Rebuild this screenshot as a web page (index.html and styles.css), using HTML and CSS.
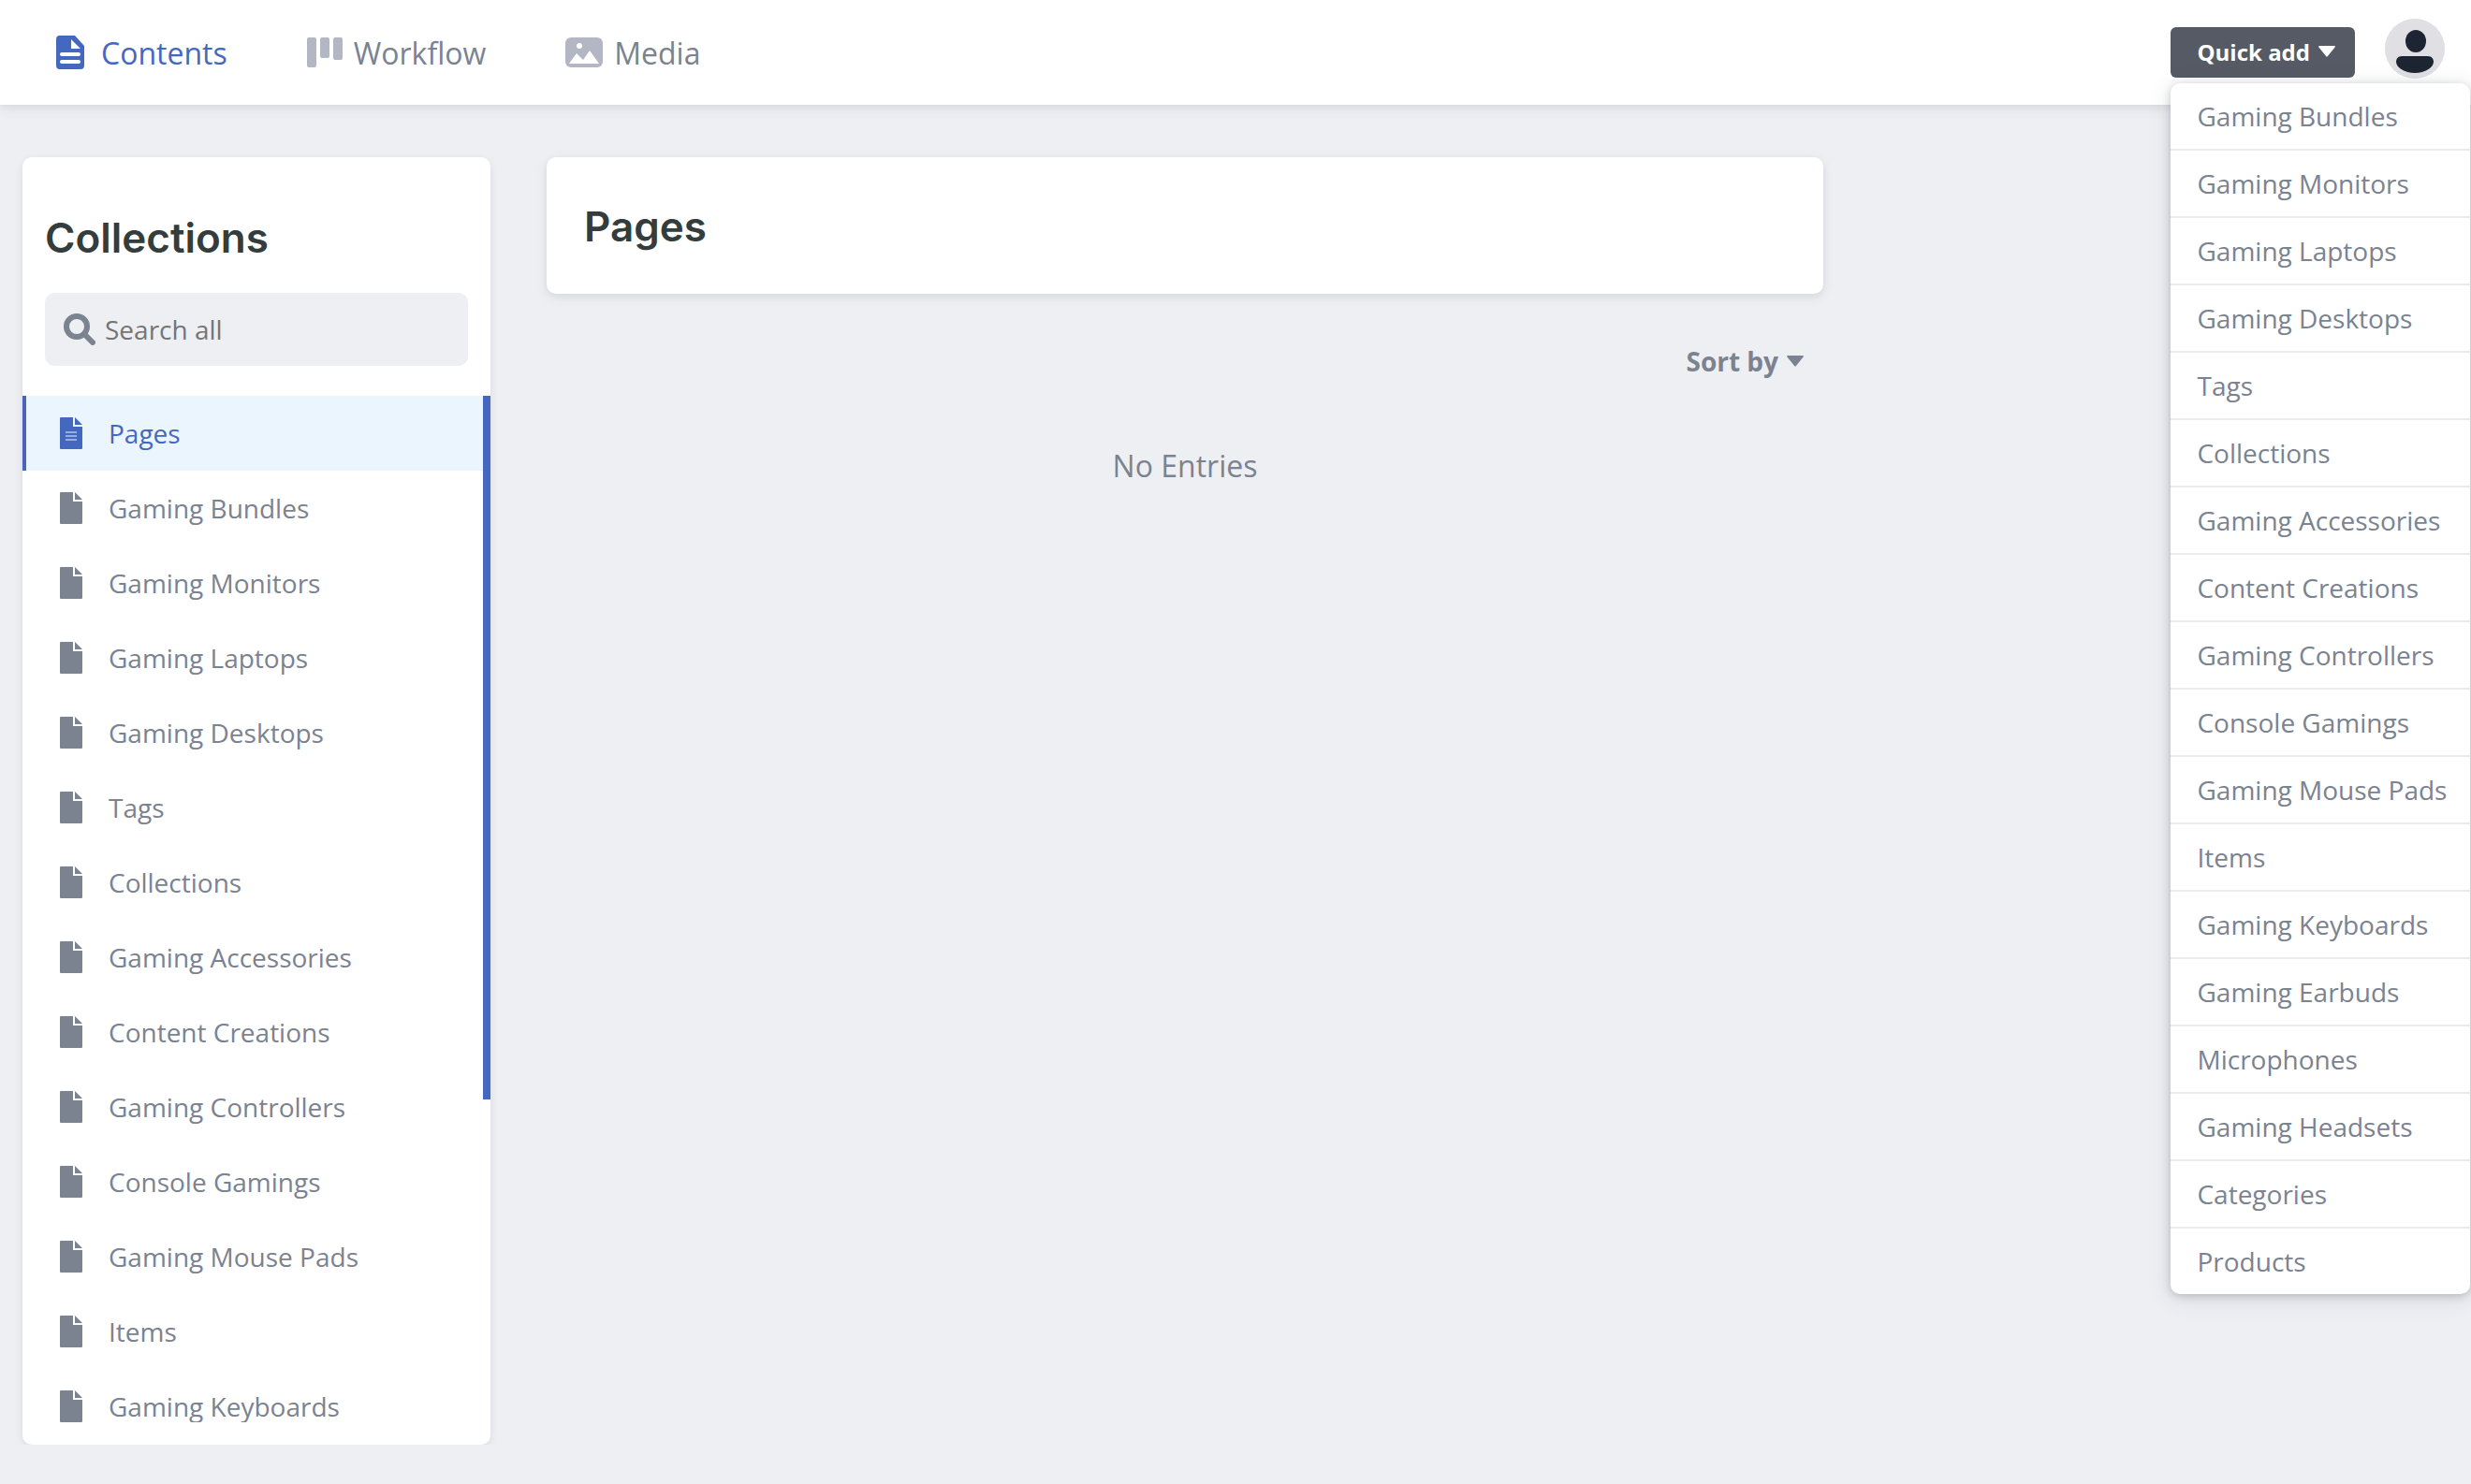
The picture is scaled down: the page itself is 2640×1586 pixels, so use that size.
FILE: index.html
```html
<!DOCTYPE html>
<html lang="en">
  <head>
    <meta charset="UTF-8" />
    <meta name="viewport" content="width=device-width, initial-scale=1.0" />
    <title>Content Manager</title>
    <link rel="stylesheet" href="styles.css">
  </head>

  <body>
    <!-- shared icons -->
    <svg class="sprite" aria-hidden="true">
      <symbol id="icon-file" viewBox="0 0 24 34">
        <path d="M1 0h13v10h10v23a1 1 0 0 1-1 1H1a1 1 0 0 1-1-1V1a1 1 0 0 1 1-1z" />
        <path d="M16 0l8 8h-8z" />
      </symbol>
      <symbol id="icon-caret" viewBox="0 0 18 12">
        <path d="M1 0h16q1.500 0 .6 1.400L9.700 11.300q-.7.900-1.400 0L.4 1.400Q-.5 0 1 0z" />
      </symbol>
    </svg>

    <header class="header">
      <nav class="nav">
        <a href="#contents" class="nav-link active">
          <svg class="nav-icon-page" viewBox="0 0 30 36">
            <path fill-rule="evenodd" d="M4 0h16l10 11v21a4 4 0 0 1-4 4H4a4 4 0 0 1-4-4V4a4 4 0 0 1 4-4zM16 4v10h10zM6 18a2 2 0 0 0 0 4h18a2 2 0 0 0 0-4zM6 26a2 2 0 0 0 0 4h18a2 2 0 0 0 0-4z" />
          </svg>
          Contents
        </a>
        <a href="#workflow" class="nav-link">
          <svg class="nav-icon-board" viewBox="0 0 38 32">
            <rect x="0" y="0" width="10" height="32" rx="2" />
            <rect x="14" y="0" width="10" height="22" rx="2" />
            <rect x="28" y="0" width="10" height="24" rx="2" />
          </svg>
          Workflow
        </a>
        <a href="#media" class="nav-link">
          <svg class="nav-icon-media" viewBox="0 0 40 32">
            <path fill-rule="evenodd" d="M6 0h28a6 6 0 0 1 6 6v20a6 6 0 0 1-6 6H6a6 6 0 0 1-6-6V6a6 6 0 0 1 6-6zM15 6a3 3 0 1 0 0 6a3 3 0 1 0 0-6zM4 28h32L26 14l-7 10l-7-7z" />
          </svg>
          Media
        </a>
      </nav>

      <div class="header-actions">
        <div class="dropdown">
          <button type="button" class="quick-add">
            Quick add
            <svg class="caret"><use href="#icon-caret" /></svg>
          </button>
          <ul class="dropdown-menu">
            <li><a href="#">Gaming Bundles</a></li>
            <li><a href="#">Gaming Monitors</a></li>
            <li><a href="#">Gaming Laptops</a></li>
            <li><a href="#">Gaming Desktops</a></li>
            <li><a href="#">Tags</a></li>
            <li><a href="#">Collections</a></li>
            <li><a href="#">Gaming Accessories</a></li>
            <li><a href="#">Content Creations</a></li>
            <li><a href="#">Gaming Controllers</a></li>
            <li><a href="#">Console Gamings</a></li>
            <li><a href="#">Gaming Mouse Pads</a></li>
            <li><a href="#">Items</a></li>
            <li><a href="#">Gaming Keyboards</a></li>
            <li><a href="#">Gaming Earbuds</a></li>
            <li><a href="#">Microphones</a></li>
            <li><a href="#">Gaming Headsets</a></li>
            <li><a href="#">Categories</a></li>
            <li><a href="#">Products</a></li>
          </ul>
        </div>
        <button type="button" class="avatar" aria-label="Account">
          <svg viewBox="0 0 64 64">
            <ellipse cx="33" cy="24" rx="11" ry="12" />
            <path d="M18 40h28c4 0 6 3 6 6c0 6-9 12-20 12s-20-6-20-12c0-3 2-6 6-6z" />
          </svg>
        </button>
      </div>
    </header>

    <div class="layout">
      <aside class="sidebar">
        <h2>Collections</h2>
        <label class="search">
          <svg class="search-icon" viewBox="0 0 34 34">
            <circle cx="14" cy="14" r="11" />
            <path d="M22 22l9 9" />
          </svg>
          <input type="text" placeholder="Search all" aria-label="Search all" />
        </label>
        <div class="collections">
          <ul class="collection-list">
            <li>
              <a href="#" class="active">
                <svg class="file-icon" viewBox="0 0 24 34">
                  <use href="#icon-file" />
                  <path class="file-lines" d="M6 16h12M6 20h12M6 24h12" />
                </svg>
                Pages
              </a>
            </li>
            <li><a href="#"><svg class="file-icon"><use href="#icon-file" /></svg>Gaming Bundles</a></li>
            <li><a href="#"><svg class="file-icon"><use href="#icon-file" /></svg>Gaming Monitors</a></li>
            <li><a href="#"><svg class="file-icon"><use href="#icon-file" /></svg>Gaming Laptops</a></li>
            <li><a href="#"><svg class="file-icon"><use href="#icon-file" /></svg>Gaming Desktops</a></li>
            <li><a href="#"><svg class="file-icon"><use href="#icon-file" /></svg>Tags</a></li>
            <li><a href="#"><svg class="file-icon"><use href="#icon-file" /></svg>Collections</a></li>
            <li><a href="#"><svg class="file-icon"><use href="#icon-file" /></svg>Gaming Accessories</a></li>
            <li><a href="#"><svg class="file-icon"><use href="#icon-file" /></svg>Content Creations</a></li>
            <li><a href="#"><svg class="file-icon"><use href="#icon-file" /></svg>Gaming Controllers</a></li>
            <li><a href="#"><svg class="file-icon"><use href="#icon-file" /></svg>Console Gamings</a></li>
            <li><a href="#"><svg class="file-icon"><use href="#icon-file" /></svg>Gaming Mouse Pads</a></li>
            <li><a href="#"><svg class="file-icon"><use href="#icon-file" /></svg>Items</a></li>
            <li><a href="#"><svg class="file-icon"><use href="#icon-file" /></svg>Gaming Keyboards</a></li>
          </ul>
          <div class="scroll-thumb"></div>
        </div>
      </aside>

      <main class="main">
        <div class="page-card">
          <h1>Pages</h1>
        </div>
        <div class="controls">
          <button type="button" class="sort-by">
            Sort by
            <svg class="caret"><use href="#icon-caret" /></svg>
          </button>
        </div>
        <p class="empty">No Entries</p>
      </main>
    </div>
  </body>
</html>
```
FILE: styles.css
```css
* {
  box-sizing: border-box;
}

body {
  margin: 0;
  background-color: #eeeff3;
  color: #7b8290;
  font-family: "Open Sans", sans-serif;
  font-size: 28px;
}

ul {
  list-style: none;
  margin: 0;
  padding: 0;
}

a {
  color: inherit;
  text-decoration: none;
}

button,
input {
  font-family: inherit;
  border: none;
}

svg {
  flex: none;
  fill: currentColor;
}

h1,
h2 {
  margin: 0;
  color: #333d3d;
  font-family: Inter, sans-serif;
  font-size: 44px;
  font-weight: 600;
  line-height: 56px;
}

.sprite {
  display: none;
}

.caret {
  width: 18px;
  height: 12px;
}

/* header */
.header {
  display: flex;
  justify-content: space-between;
  align-items: center;
  height: 112px;
  padding: 0 28px 0 60px;
  background-color: white;
  box-shadow: 0 4px 12px rgba(68, 74, 87, 0.1), 0 2px 6px rgba(68, 74, 87, 0.05);
}

.nav {
  display: flex;
  gap: 85px;
  font-size: 32px;
}

.nav-link {
  display: flex;
  align-items: center;
  gap: 12px;
}

.nav-link svg {
  fill: #b3b7c4;
}

.nav-link.active {
  gap: 18px;
  color: #4468c0;
}

.nav-link.active svg {
  fill: #4468c0;
}

.nav-icon-page {
  width: 30px;
  height: 36px;
}

.nav-icon-board {
  width: 38px;
  height: 32px;
}

.nav-icon-media {
  width: 40px;
  height: 32px;
}

.header-actions {
  display: flex;
  align-items: flex-start;
  gap: 32px;
  height: 72px;
}

.dropdown {
  position: relative;
  padding-top: 9px;
}

.quick-add {
  display: flex;
  align-items: center;
  gap: 9px;
  height: 54px;
  padding: 0 21px 2px 28px;
  border-radius: 6px;
  background-color: #555a65;
  color: white;
  font-size: 24px;
  font-weight: 700;
}

.dropdown-menu {
  position: absolute;
  top: 69px;
  left: 0;
  z-index: 1;
  width: 320px;
  border-radius: 10px;
  background-color: white;
  box-shadow: 0 4px 24px rgba(68, 74, 87, 0.15), 0 2px 8px rgba(68, 74, 87, 0.25);
}

.dropdown-menu a {
  display: block;
  padding: 0 28px;
  line-height: 70px;
  white-space: nowrap;
}

.dropdown-menu li + li {
  border-top: 2px solid #eaebf1;
}

.avatar {
  width: 64px;
  height: 64px;
  padding: 0;
  border-radius: 50%;
  background-color: #dfdfe4;
  color: #1e2532;
}

.avatar svg {
  display: block;
}

/* content */
.layout {
  display: flex;
  align-items: flex-start;
  gap: 60px;
  padding: 56px 24px 0;
}

.sidebar {
  display: flex;
  flex-direction: column;
  flex: none;
  width: 500px;
  height: calc(100vh - 210px);
  padding: 58px 0 24px;
  border-radius: 10px;
  background-color: white;
  box-shadow: 0 4px 12px rgba(68, 74, 87, 0.06), 0 2px 6px rgba(68, 74, 87, 0.05);
}

.sidebar h2 {
  padding: 0 24px;
}

.search {
  display: flex;
  align-items: center;
  gap: 10px;
  height: 78px;
  margin: 31px 24px 32px;
  padding: 0 20px;
  border-radius: 10px;
  background-color: #eeeff3;
}

.search-icon {
  width: 34px;
  height: 34px;
  fill: none;
  stroke: #7b8290;
  stroke-width: 6;
  stroke-linecap: round;
}

.search input {
  flex: 1;
  min-width: 0;
  padding: 0;
  background: none;
  outline: none;
  font-size: 28px;
}

.search input::placeholder {
  color: #757575;
}

.collections {
  position: relative;
  flex: 1;
  min-height: 0;
}

.collection-list {
  height: 100%;
  overflow-y: auto;
  scrollbar-width: none;
}

.collection-list a {
  display: flex;
  align-items: center;
  gap: 28px;
  height: 80px;
  padding: 0 24px 0 36px;
  border-left: 4px solid transparent;
}

.collection-list a.active {
  border-left-color: #4c63bd;
  background-color: #eaf5fe;
  color: #4468c0;
}

.file-icon {
  width: 24px;
  height: 34px;
}

.file-lines {
  fill: none;
  stroke: #eaf5fe;
  stroke-width: 1;
}

.scroll-thumb {
  position: absolute;
  top: 0;
  right: 0;
  width: 8px;
  height: 752px;
  background-color: #4468c0;
}

.main {
  flex: 1;
  max-width: 1364px;
}

.page-card {
  padding: 46px 40px 44px;
  border-radius: 10px;
  background-color: white;
  box-shadow: 0 4px 12px rgba(68, 74, 87, 0.1), 0 2px 6px rgba(68, 74, 87, 0.05);
}

.controls {
  display: flex;
  justify-content: flex-end;
  padding: 52px 21px 0;
}

.sort-by {
  display: flex;
  align-items: center;
  gap: 9px;
  height: 40px;
  padding: 0;
  background: none;
  color: #7b8290;
  font-size: 28px;
  font-weight: 700;
}

.empty {
  margin: 68px 0 0;
  font-size: 32px;
  line-height: 48px;
  text-align: center;
}
```
